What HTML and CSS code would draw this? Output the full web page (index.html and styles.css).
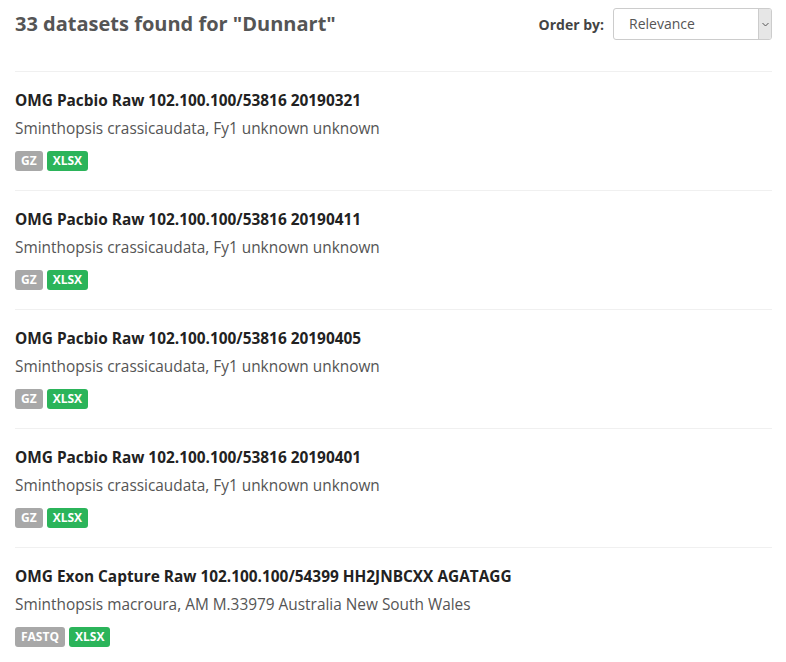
FILE: index.html
```html
<!DOCTYPE html>
<html>
<head>
<meta charset="utf-8">
<link rel="stylesheet" href="styles.css">
</head>
<body>
<div class="page">
  <div class="header">
    <h1 class="count">33 datasets found for "Dunnart"</h1>
    <div class="order">
      <span class="order-label">Order by:</span>
      <div class="select">
        <span class="select-value">Relevance</span>
        <span class="select-arrow"><svg width="7" height="5" viewBox="0 0 7 5"><path d="M0.5 1 L3.5 4 L6.5 1" fill="none" stroke="#555" stroke-width="1"/></svg></span>
      </div>
    </div>
  </div>
  <ul class="results">
    <li class="item">
      <div class="title">OMG Pacbio Raw 102.100.100/53816 20190321</div>
      <div class="desc">Sminthopsis crassicaudata, Fy1 unknown unknown</div>
      <div class="badges"><span class="badge gray">GZ</span><span class="badge green">XLSX</span></div>
    </li>
    <li class="item">
      <div class="title">OMG Pacbio Raw 102.100.100/53816 20190411</div>
      <div class="desc">Sminthopsis crassicaudata, Fy1 unknown unknown</div>
      <div class="badges"><span class="badge gray">GZ</span><span class="badge green">XLSX</span></div>
    </li>
    <li class="item">
      <div class="title">OMG Pacbio Raw 102.100.100/53816 20190405</div>
      <div class="desc">Sminthopsis crassicaudata, Fy1 unknown unknown</div>
      <div class="badges"><span class="badge gray">GZ</span><span class="badge green">XLSX</span></div>
    </li>
    <li class="item">
      <div class="title">OMG Pacbio Raw 102.100.100/53816 20190401</div>
      <div class="desc">Sminthopsis crassicaudata, Fy1 unknown unknown</div>
      <div class="badges"><span class="badge gray">GZ</span><span class="badge green">XLSX</span></div>
    </li>
    <li class="item">
      <div class="title">OMG Exon Capture Raw 102.100.100/54399 HH2JNBCXX AGATAGG</div>
      <div class="desc">Sminthopsis macroura, AM M.33979 Australia New South Wales</div>
      <div class="badges"><span class="badge gray">FASTQ</span><span class="badge green">XLSX</span></div>
    </li>
  </ul>
</div>
</body>
</html>
```
FILE: styles.css
```css
html, body {
  margin: 0;
  padding: 0;
  background: #fff;
}
body {
  font-family: "Open Sans", "Liberation Sans", sans-serif;
  color: #333;
}
.page {
  padding: 0 14px 0 15px;
}
.header {
  display: flex;
  justify-content: space-between;
  align-items: center;
  height: 48px;
}
.count {
  margin: 0;
  font-size: 20px;
  font-weight: 700;
  color: #555;
  line-height: 30px;
}
.order {
  display: flex;
  align-items: center;
  gap: 9px;
}
.order-label {
  font-size: 14px;
  font-weight: 700;
  color: #444;
}
.select {
  display: flex;
  width: 159px;
  height: 32px;
  box-sizing: border-box;
  border: 1px solid #ccc;
  border-radius: 3px;
  overflow: hidden;
}
.select-value {
  flex: 1;
  font-size: 14px;
  color: #555;
  line-height: 30px;
  padding-left: 15px;
}
.select-arrow {
  width: 12px;
  background: #e6e6e6;
  border-left: 1px solid #ccc;
  display: flex;
  align-items: center;
  justify-content: center;
}
.results {
  list-style: none;
  margin: 23px 0 0;
  padding: 0;
}
.item {
  border-top: 1px solid #f0f0f0;
  padding: 19px 0 19px;
}
.title {
  font-size: 15.4px;
  font-weight: 700;
  line-height: 20px;
  color: #222;
}
.desc {
  font-size: 15.4px;
  line-height: 20px;
  color: #555;
  margin-top: 8px;
}
.badges {
  display: flex;
  gap: 4px;
  margin-top: 12px;
}
.badge {
  display: inline-block;
  height: 20px;
  line-height: 20px;
  padding: 0 6px;
  border-radius: 3px;
  color: #fff;
  font-size: 12px;
  font-weight: 700;
}
.badge.gray { background: #a8a8a8; }
.badge.green { background: #2bb45a; }
```
